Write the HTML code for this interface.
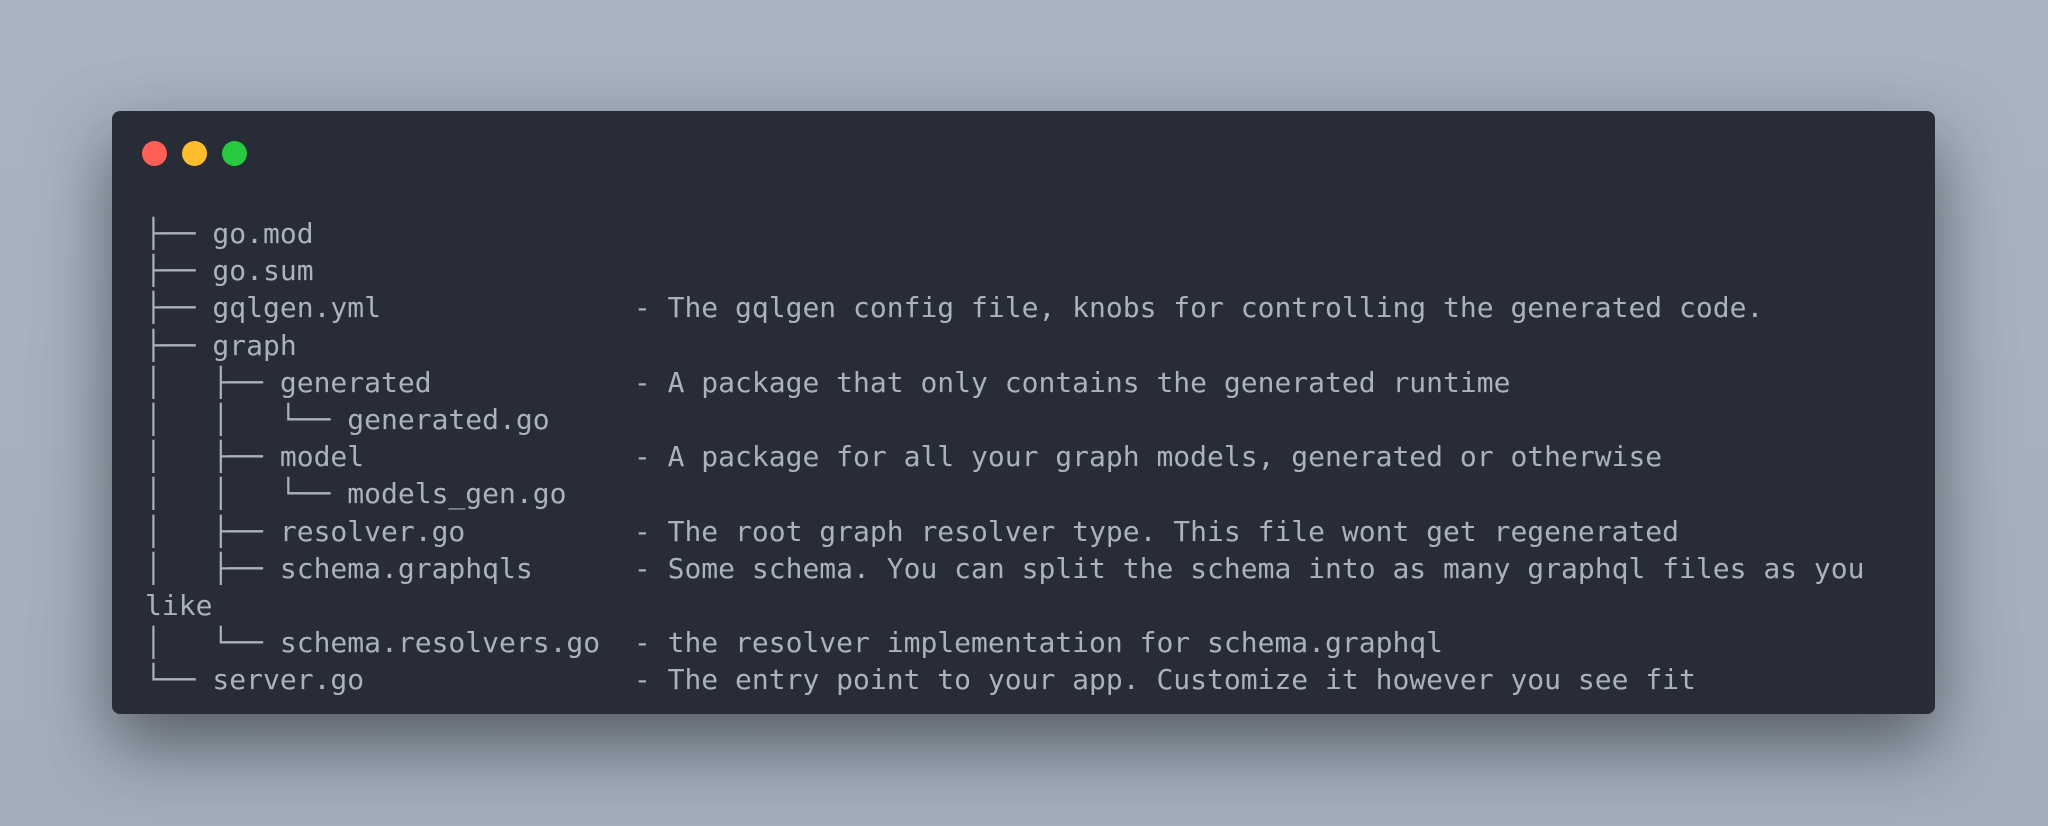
<!DOCTYPE html>
<html><head><meta charset="utf-8"><style>
html,body{margin:0;padding:0;width:2048px;height:826px;overflow:hidden;background:linear-gradient(180deg,#a9b4c0 0%,#a3aeba 100%);}
.win{position:absolute;left:112px;top:111px;width:1823px;height:603px;background:#282c36;border-radius:8px;box-shadow:0 30px 70px rgba(20,25,35,0.55);}
.dot{position:absolute;top:141px;width:25px;height:25px;border-radius:50%;}
pre{position:absolute;left:145px;top:215px;margin:0;font-family:"DejaVu Sans Mono","Liberation Mono",monospace;font-size:28px;line-height:37.2px;color:#aab2be;letter-spacing:0;}
</style></head><body>
<div class="win"></div>
<div class="dot" style="left:142px;background:#ff5f56"></div>
<div class="dot" style="left:182px;background:#ffbd2e"></div>
<div class="dot" style="left:222px;background:#27c93f"></div>
<pre>├── go.mod
├── go.sum
├── gqlgen.yml               - The gqlgen config file, knobs for controlling the generated code.
├── graph
│   ├── generated            - A package that only contains the generated runtime
│   │   └── generated.go
│   ├── model                - A package for all your graph models, generated or otherwise
│   │   └── models_gen.go
│   ├── resolver.go          - The root graph resolver type. This file wont get regenerated
│   ├── schema.graphqls      - Some schema. You can split the schema into as many graphql files as you
like
│   └── schema.resolvers.go  - the resolver implementation for schema.graphql
└── server.go                - The entry point to your app. Customize it however you see fit</pre>
</body></html>
